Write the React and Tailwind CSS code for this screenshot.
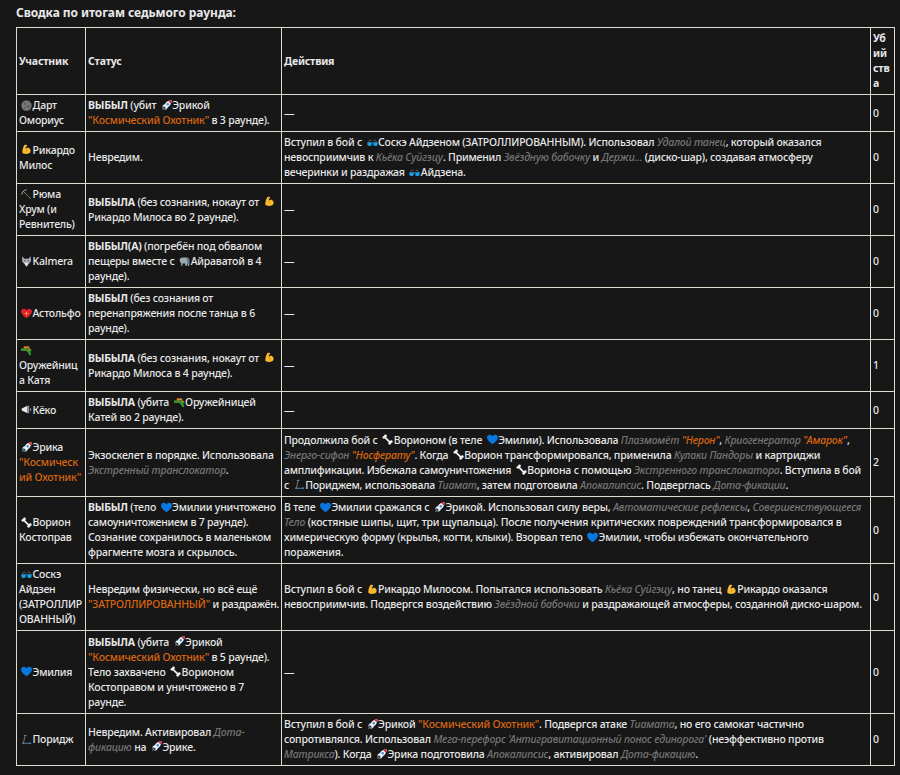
import React from 'react';

const emoji = 'inline-block ml-0.5 -mr-[2px] w-[11px] h-[11px] align-[-1.5px]';

const Rocket = () => (
  <svg viewBox="0 0 16 16" className={emoji}>
    <path d="M15.500.5c-4.500 0-8 2-10 5.500L3.500 7 1.500 9.500l3.500.3 1.200 1.200.3 3.500L9 12.500l1-2c3.500-2 5.500-5.500 5.500-10z" fill="#eef0f2" />
    <path d="M15.500.5c-1.800 0-3.500.4-5 1.100l3.900 3.900c.7-1.500 1.100-3.200 1.100-5z" fill="#e0262f" />
    <circle cx="9.800" cy="6.200" r="1.700" fill="#2f8fe0" />
    <path d="M1.500 9.500l3.500.3-2.700 2.700z M6.500 14.500l-.3-3.500-2.700 2.700z" fill="#3b88c3" />
    <path d="M3.500 11.500l-2.500 3.500 3.500-2.500z" fill="#ffac33" />
  </svg>
);

const Muscle = () => (
  <svg viewBox="0 0 16 16" className={emoji}>
    <path d="M5 1.500c1.500-.8 3.500-.5 4 .5.4 1-.8 1.800-1.800 1.800L7 7c1-1.500 3.500-2 5-1 2 1.200 2.500 4 1.500 6-1 1.800-3.500 2.500-6 2.500-3 0-5-.5-5.500-2C1.500 10 3 4 5 1.500z" fill="#fbb92e" />
    <path d="M7 7c1.200 1 1.500 2.500 1 4" stroke="#c98a14" strokeWidth="1" fill="none" />
  </svg>
);

const Bone = () => (
  <svg viewBox="0 0 16 16" className={emoji}>
    <path d="M4 4.500L12 12.500" stroke="#f4f4f4" strokeWidth="2.600" />
    <circle cx="2.800" cy="4.800" r="2" fill="#f4f4f4" />
    <circle cx="5" cy="2.800" r="2" fill="#f4f4f4" />
    <circle cx="11.200" cy="13.500" r="2" fill="#f4f4f4" />
    <circle cx="13.500" cy="11.200" r="2" fill="#f4f4f4" />
  </svg>
);

const BlueHeart = () => (
  <svg viewBox="0 0 16 16" className={emoji}>
    <path d="M8 15C4 11.800 0 8.500 0 5 0 2.800 1.800 1 4 1c1.700 0 3.200.9 4 2.400C8.800 1.900 10.300 1 12 1c2.200 0 4 1.800 4 4 0 3.500-4 6.800-8 10z" fill="#0878e0" />
  </svg>
);

const Glasses = () => (
  <svg viewBox="0 0 16 16" className={emoji}>
    <path d="M2.500 7c.7-2.500 2.500-3 4-2M13.500 7c-.7-2.500-2.500-3-4-2" stroke="#7d848d" strokeWidth="1" fill="none" />
    <path d="M.5 7.500h6.500v2.500a3.200 3.200 0 0 1-6.500 0z M9 7.500h6.500v2.500a3.200 3.200 0 0 1-6.500 0z" fill="#16a0ea" />
    <path d="M7 8h2" stroke="#7d848d" strokeWidth="1" />
  </svg>
);

const Scooter = () => (
  <svg viewBox="0 0 16 16" className={emoji}>
    <path d="M6 1.500L3.500 13.500H13" stroke="#8d96a0" strokeWidth="1.100" fill="none" />
    <path d="M4 2h4" stroke="#8d96a0" strokeWidth="1.100" />
    <circle cx="3" cy="13.500" r="1.400" fill="#3b88c3" />
    <circle cx="13.500" cy="13.500" r="1.400" fill="#3b88c3" />
  </svg>
);

const Moon = () => (
  <svg viewBox="0 0 16 16" className={emoji}>
    <circle cx="8" cy="8" r="7.500" fill="#777" />
    <circle cx="5.500" cy="5.500" r="1.700" fill="#5c5c5c" />
    <circle cx="10.500" cy="9" r="2.200" fill="#5c5c5c" />
    <circle cx="5.500" cy="11" r="1.200" fill="#5c5c5c" />
    <circle cx="10.500" cy="3.500" r="1" fill="#5c5c5c" />
  </svg>
);

const Pick = () => (
  <svg viewBox="0 0 16 16" className={emoji}>
    <path d="M14.500 14.500L3 3" stroke="#a08a68" strokeWidth="1.200" />
    <path d="M1 8c.5-3.500 3.500-6.500 7-7" stroke="#c4ccd4" strokeWidth="1.300" fill="none" />
  </svg>
);

const Wolf = () => (
  <svg viewBox="0 0 16 16" className={emoji}>
    <path d="M2 .5l3 3.500h6l3-3.500.5 7L8 15.500 1.500 7.500z" fill="#a9adb5" />
    <path d="M5 9l3 6.500L11 9l-3 1z" fill="#e6e6e6" />
    <circle cx="5.500" cy="7" r="1" fill="#333" />
    <circle cx="10.500" cy="7" r="1" fill="#333" />
  </svg>
);

const Sparkle = () => (
  <svg viewBox="0 0 16 16" className={emoji}>
    <path d="M8 15C4 11.800 0 8.500 0 5 0 2.800 1.800 1 4 1c1.700 0 3.200.9 4 2.400C8.800 1.900 10.300 1 12 1c2.200 0 4 1.800 4 4 0 3.500-4 6.800-8 10z" fill="#e0202e" />
    <path d="M8 4.500l.9 2.600 2.600.9-2.600.9-.9 2.600-.9-2.600L4.500 8l2.600-.9z" fill="#ffb52e" />
  </svg>
);

const Gun = () => (
  <svg viewBox="0 0 16 16" className={emoji}>
    <path d="M0 5h9v3.500H0z" fill="#3f9e2e" />
    <path d="M4 2h8v3H4z" fill="#e08a2a" />
    <path d="M8 6h6.500l1 2.500-2 .8 1.500 5-3 .7-2-4.500-2-1z" fill="#2f9a2e" />
    <path d="M10.500 5h3l.5 2-3.500.5z" fill="#e08a2a" />
  </svg>
);

const Megaphone = () => (
  <svg viewBox="0 0 16 16" className={emoji}>
    <path d="M1 6.500l8.500-4v11L1 9.500z" fill="#e8e8e8" />
    <path d="M9.500 2.500h2.500v11H9.500z" fill="#8a8f98" />
    <path d="M14 6v4" stroke="#8a8f98" strokeWidth="1.500" />
  </svg>
);

const Elephant = () => (
  <svg viewBox="0 0 16 16" className={emoji}>
    <path d="M1 5c0-2 2-3 5-3h5c2 0 4 1.500 4 4v8h-2v-3h-1v3H9v-3H5v3H3v-4C1.500 10 1 7 1 5z" fill="#99aab5" />
    <path d="M11 3c2 0 3.500 1 4 3l-1 6h-1z" fill="#66757f" />
  </svg>
);

const Tool = ({ children }) => <em className="text-[#757575]">{children}</em>;
const Hot = ({ children }) => <span className="text-[#d9650f]">{children}</span>;
const Dash = () => <>—</>;

const Cell = ({ children, className = '' }) => (
  <td className={`border border-[#dcdcd0] px-0.5 py-[3px] align-middle ${className}`}>{children}</td>
);

const Head = ({ children }) => (
  <th className="border border-[#dcdcd0] px-0.5 py-[3px] text-left font-bold align-middle">{children}</th>
);

const rows = [
  {
    h: 'h-[37px]',
    name: <><Moon /> Дарт Омориус</>,
    status: <><b>ВЫБЫЛ</b> (убит <Rocket /> Эрикой <Hot>"Космический Охотник"</Hot> в 3 раунде).</>,
    actions: <Dash />,
    kills: 0,
  },
  {
    h: 'h-[52px]',
    name: <><Muscle /> Рикардо Милос</>,
    status: <>Невредим.</>,
    actions: <>Вступил в бой с <Glasses /> Соскэ Айдзеном (ЗАТРОЛЛИРОВАННЫМ). Использовал <Tool>Удалой танец</Tool>, который оказался невосприимчив к <Tool>Кьёка Суйгэцу</Tool>. Применил <Tool>Звёздную бабочку</Tool> и <Tool>Держи...</Tool> (диско-шар), создавая атмосферу вечеринки и раздражая <Glasses /> Айдзена.</>,
    kills: 0,
  },
  {
    h: 'h-[52px]',
    name: <><Pick /> Рюма Хрум (и Ревнитель)</>,
    status: <><b>ВЫБЫЛА</b> (без сознания, нокаут от <Muscle /> Рикардо Милоса во 2 раунде).</>,
    actions: <Dash />,
    kills: 0,
  },
  {
    h: 'h-[52px]',
    name: <><Wolf /> Kalmera</>,
    status: <><b>ВЫБЫЛ(А)</b> (погребён под обвалом пещеры вместе с <Elephant /> Айраватой в 4 раунде).</>,
    actions: <Dash />,
    kills: 0,
  },
  {
    h: 'h-[52px]',
    name: <><Sparkle /> Астольфо</>,
    status: <><b>ВЫБЫЛ</b> (без сознания от перенапряжения после танца в 6 раунде).</>,
    actions: <Dash />,
    kills: 0,
  },
  {
    h: 'h-[52px]',
    name: <><Gun /> Оружейница Катя</>,
    status: <><b>ВЫБЫЛА</b> (без сознания, нокаут от <Muscle /> Рикардо Милоса в 4 раунде).</>,
    actions: <Dash />,
    kills: 1,
  },
  {
    h: 'h-[36px]',
    name: <><Megaphone /> Кёко</>,
    status: <><b>ВЫБЫЛА</b> (убита <Gun /> Оружейницей Катей во 2 раунде).</>,
    actions: <Dash />,
    kills: 0,
  },
  {
    h: 'h-[68px]',
    name: <><Rocket /> Эрика <Hot>"Космический Охотник"</Hot></>,
    status: <>Экзоскелет в порядке. Использовала <Tool>Экстренный транслокатор</Tool>.</>,
    actions: <>Продолжила бой с <Bone /> Ворионом (в теле <BlueHeart /> Эмилии). Использовала <Tool>Плазмомёт <Hot>"Нерон"</Hot></Tool>, <Tool>Криогенератор <Hot>"Амарок"</Hot></Tool>, <Tool>Энерго-сифон <Hot>"Носферату"</Hot></Tool>. Когда <Bone /> Ворион трансформировался, применила <Tool>Кулаки Пандоры</Tool> и картриджи амплификации. Избежала самоуничтожения <Bone /> Вориона с помощью <Tool>Экстренного транслокатора</Tool>. Вступила в бой с <Scooter /> Пориджем, использовала <Tool>Тиамат</Tool>, затем подготовила <Tool>Апокалипсис</Tool>. Подверглась <Tool>Дота-фикации</Tool>.</>,
    kills: 2,
  },
  {
    h: 'h-[67px]',
    name: <><Bone /> Ворион Костоправ</>,
    status: <><b>ВЫБЫЛ</b> (тело <BlueHeart /> Эмилии уничтожено самоуничтожением в 7 раунде). Сознание сохранилось в маленьком фрагменте мозга и скрылось.</>,
    actions: <>В теле <BlueHeart /> Эмилии сражался с <Rocket /> Эрикой. Использовал силу веры, <Tool>Автоматические рефлексы</Tool>, <Tool>Совершенствующееся Тело</Tool> (костяные шипы, щит, три щупальца). После получения критических повреждений трансформировался в химерическую форму (крылья, когти, клыки). Взорвал тело <BlueHeart /> Эмилии, чтобы избежать окончательного поражения.</>,
    kills: 0,
  },
  {
    h: 'h-[67px]',
    name: <><Glasses /> Соскэ Айдзен (ЗАТРОЛЛИРОВАННЫЙ)</>,
    status: <>Невредим физически, но всё ещё <span className="whitespace-nowrap"><Hot>"ЗАТРОЛЛИРОВАННЫЙ"</Hot> и раздражён.</span></>,
    actions: <>Вступил в бой с <Muscle /> Рикардо Милосом. Попытался использовать <Tool>Кьёка Суйгэцу</Tool>, но танец <Muscle /> Рикардо оказался невосприимчив. Подвергся воздействию <Tool>Звёздной бабочки</Tool> и раздражающей атмосферы, созданной диско-шаром.</>,
    kills: 0,
  },
  {
    h: 'h-[83px]',
    name: <><BlueHeart /> Эмилия</>,
    status: <><b>ВЫБЫЛА</b> (убита <Rocket /> Эрикой <Hot>"Космический Охотник"</Hot> в 5 раунде). Тело захвачено <Bone /> Ворионом Костоправом и уничтожено в 7 раунде.</>,
    actions: <Dash />,
    kills: 0,
  },
  {
    h: 'h-[52px]',
    name: <><Scooter /> Поридж</>,
    status: <>Невредим. Активировал <Tool>Дота-фикацию</Tool> на <Rocket /> Эрике.</>,
    actions: <>Вступил в бой с <Rocket /> Эрикой <Hot>"Космический Охотник"</Hot>. Подвергся атаке <Tool>Тиамата</Tool>, но его самокат частично сопротивлялся. Использовал <Tool>Мега-перефорс 'Антигравитационный понос единорога'</Tool> (неэффективно против <Tool>Матрикса</Tool>). Когда <Rocket /> Эрика подготовила <Tool>Апокалипсис</Tool>, активировал <Tool>Дота-фикацию</Tool>.</>,
    kills: 0,
  },
];

const App = () => {
  return (
    <div className="min-h-[775px] bg-[#171717] pl-4 pr-1.5 pt-[5px] text-[10.5px] leading-[15px] tracking-[-0.2px] font-medium text-[#e8e8e8] font-['Noto_Sans',sans-serif]">
      <div className="h-[22px] text-xs leading-[16px] tracking-[-0.07px] font-bold">Сводка по итогам седьмого раунда:</div>
      <table className="w-[879px] table-fixed border-collapse">
        <colgroup>
          <col className="w-[69px]" />
          <col className="w-[196px]" />
          <col className="w-[589px]" />
          <col className="w-[24px]" />
        </colgroup>
        <thead>
          <tr className="h-[67px]">
            <Head>Участник</Head>
            <Head>Статус</Head>
            <Head>Действия</Head>
            <Head><span className="break-all">Убийства</span></Head>
          </tr>
        </thead>
        <tbody>
          {rows.map((r, i) => (
            <tr key={i} className={r.h}>
              <Cell className="break-words">{r.name}</Cell>
              <Cell>{r.status}</Cell>
              <Cell>{r.actions}</Cell>
              <Cell>{r.kills}</Cell>
            </tr>
          ))}
        </tbody>
      </table>
    </div>
  );
};

export default App;
